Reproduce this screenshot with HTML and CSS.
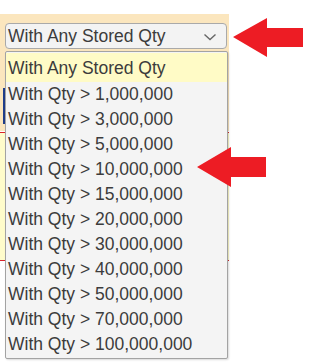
FILE: index.html
```html
<!DOCTYPE html>
<html lang="en">
<head>
    <meta charset="UTF-8">
    <meta name="viewport" content="width=device-width, initial-scale=1.0">
    <title>Stock filter</title>
    <link rel="stylesheet" href="styles.css">
</head>
<body>
    <div class="page">
        <div class="toolbar">
            <div class="select">
                <span>With Any Stored Qty</span>
                <svg class="chevron" width="14" height="8" viewBox="0 0 14 8">
                    <path d="M1.5 1.5 L7 6.5 L12.5 1.5" fill="none" stroke="#666" stroke-width="1.4"/>
                </svg>
            </div>
            <div class="edge"></div>
        </div>
        <div class="results"></div>

        <!-- open dropdown list sits over the page -->
        <ul class="options">
            <li class="selected">With Any Stored Qty</li>
            <li>With Qty &gt; 1,000,000</li>
            <li>With Qty &gt; 3,000,000</li>
            <li>With Qty &gt; 5,000,000</li>
            <li>With Qty &gt; 10,000,000</li>
            <li>With Qty &gt; 15,000,000</li>
            <li>With Qty &gt; 20,000,000</li>
            <li>With Qty &gt; 30,000,000</li>
            <li>With Qty &gt; 40,000,000</li>
            <li>With Qty &gt; 50,000,000</li>
            <li>With Qty &gt; 70,000,000</li>
            <li>With Qty &gt; 100,000,000</li>
        </ul>

        <!-- annotation arrows -->
        <svg class="arrow arrow-top" width="72" height="40" viewBox="0 0 72 40">
            <polygon points="0,19 34,0 34,10 70,10 70,29 34,29 34,39" fill="#ed1c24"/>
        </svg>
        <svg class="arrow arrow-mid" width="72" height="40" viewBox="0 0 72 40">
            <polygon points="0,20 34,0 34,10 69,10 69,30 34,30 34,40" fill="#ed1c24"/>
        </svg>
    </div>
</body>
</html>
```

FILE: styles.css
```css
body {
    margin: 0;
    background-color: #fff;
    font-family: "Liberation Sans", Arial, sans-serif;
    color: #3c3c3c;
}
.page {
    position: relative;
    width: 317px;
    height: 363px;
    overflow: hidden;
    padding-top: 14px;
    box-sizing: border-box;
}
.toolbar {
    width: 229px;
    height: 117px;
    background-color: #fbe6be;
    padding: 9px 0 0 5px;
    box-sizing: border-box;
}
.select {
    width: 222px;
    height: 26px;
    box-sizing: border-box;
    border: 1px solid #a9a9a9;
    border-radius: 4px;
    background-color: #f3f3f3;
    display: flex;
    align-items: center;
    justify-content: space-between;
    padding: 0 9px 0 2px;
    font-size: 17.5px;
}
.chevron {
    margin-top: 1px;
}
.edge {
    margin: 39px 0 0 -2px;
    width: 2px;
    height: 36px;
    background-color: #1f3d8a;
}
.results {
    width: 229px;
    height: 127px;
    margin-top: 1px;
    background-color: #fffccb;
    border-top: 1px solid #d9232a;
    border-bottom: 1px solid #d9232a;
}
.options {
    position: absolute;
    left: 5px;
    top: 51px;
    width: 223px;
    margin: 0;
    padding: 1px 0 1px;
    list-style: none;
    box-sizing: border-box;
    background-color: #f4f4f4;
    border: 1px solid #a3a3a3;
    border-radius: 2px;
    box-shadow: 1px 1px 2px rgba(0, 0, 0, 0.15);
    font-size: 17.5px;
}
.options li {
    height: 25px;
    line-height: 25px;
    padding-left: 2px;
    white-space: nowrap;
}
.options li.selected {
    height: 29px;
    line-height: 31px;
    background-color: #fffbc6;
}
.arrow {
    position: absolute;
}
.arrow-top {
    left: 233px;
    top: 18px;
}
.arrow-mid {
    left: 197px;
    top: 147px;
}
```
